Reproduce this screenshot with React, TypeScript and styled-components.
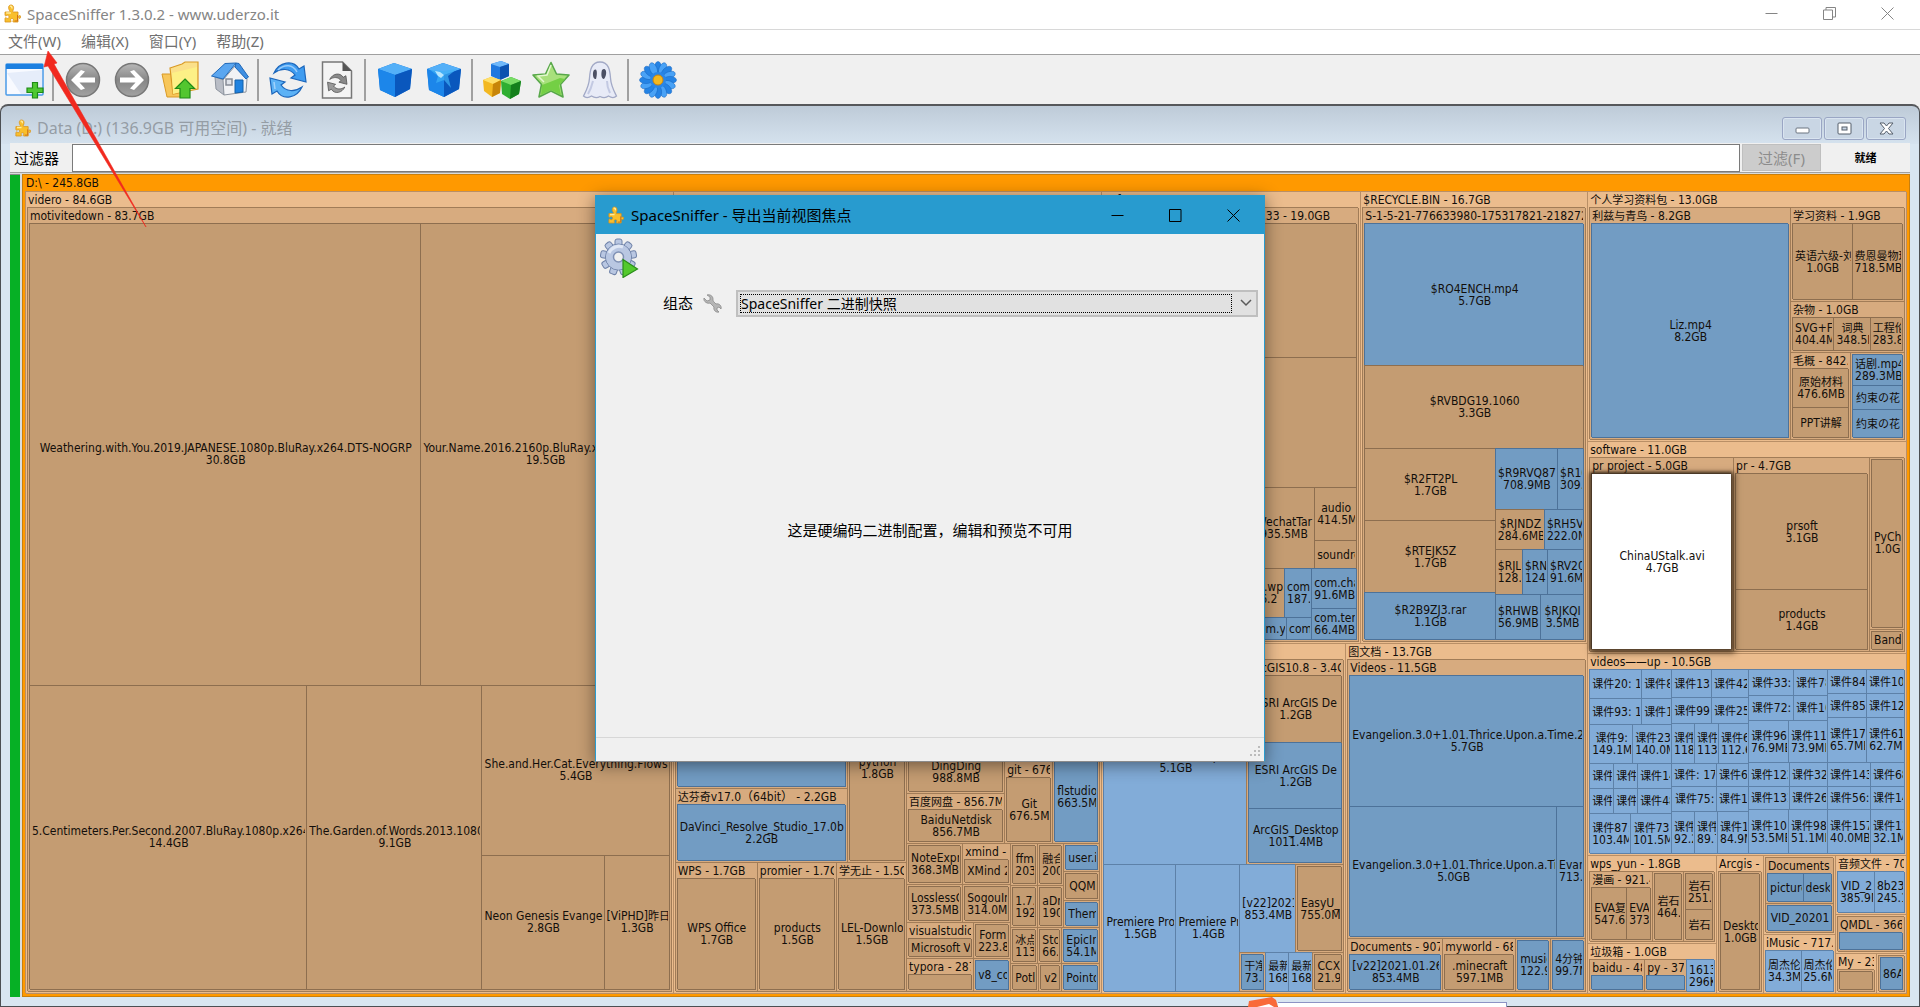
import React from "react";
import styled, { createGlobalStyle, css } from "styled-components";

const MAP_FONT = `"DejaVu Sans Condensed", "Noto Sans CJK SC", sans-serif`;
const UI_FONT = `"Noto Sans", "Noto Sans CJK SC", sans-serif`;

/* ---------- treemap data ---------- */

type Split = { kind: "row" | "col"; size: number; items: Item[] };
type Dir = { kind: "dir"; size: number; title: string; items: Item[]; flow: "row" | "col" };
type Leaf = { kind: "folder" | "file" | "active"; size: number; name: string; bytes: string };
type Item = Split | Dir | Leaf;

const row = (size: number, ...items: Item[]): Split => ({ kind: "row", size, items });
const col = (size: number, ...items: Item[]): Split => ({ kind: "col", size, items });
const dir = (size: number, title: string, ...items: Item[]): Dir => ({ kind: "dir", size, title, items, flow: "col" });
const dirRow = (size: number, title: string, ...items: Item[]): Dir => ({ kind: "dir", size, title, items, flow: "row" });
const folder = (size: number, name: string, bytes = ""): Leaf => ({ kind: "folder", size, name, bytes });
const file = (size: number, name: string, bytes = ""): Leaf => ({ kind: "file", size, name, bytes });
const active = (size: number, name: string, bytes = ""): Leaf => ({ kind: "active", size, name, bytes });
/* a directory too small for its own caption */
const boxed = (size: number, item: Leaf): Dir => dir(size, "", item);

const videro = dir(648, "videro - 84.6GB",
  dir(1, "motivitedown - 83.7GB",
    row(461,
      folder(391, "Weathering.with.You.2019.JAPANESE.1080p.BluRay.x264.DTS-NOGRP", "30.8GB"),
      folder(248, "Your.Name.2016.2160p.BluRay.x265.10bit.HDR", "19.5GB")),
    row(304,
      folder(277, "5.Centimeters.Per.Second.2007.BluRay.1080p.x264.DTS", "14.4GB"),
      folder(175, "The.Garden.of.Words.2013.1080p.BluRay", "9.1GB"),
      col(187,
        folder(170, "She.and.Her.Cat.Everything.Flows", "5.4GB"),
        row(134, folder(122, "Neon Genesis Evangeli", "2.8GB"), folder(65, "[ViPHD]昨日", "1.3GB"))))));

const programs = dirRow(429, "\u00a0",
  col(231,
    row(655,
      col(172,
        dir(581, "", file(1, "")),
        dir(74, "达芬奇v17.0（64bit） - 2.2GB", file(1, "DaVinci_Resolve_Studio_17.0b2", "2.2GB"))),
      col(59,
        folder(465, ""),
        dir(190, "", folder(1, "python", "1.8GB")))),
    row(129,
      dir(82, "WPS - 1.7GB", folder(1, "WPS Office", "1.7GB")),
      dir(79, "promier - 1.7G", folder(1, "products", "1.5GB")),
      dir(70, "学无止 - 1.5G", folder(1, "LEL-Downlo", "1.5GB")))),
  col(193,
    row(636,
      col(98,
        folder(542, ""),
        dir(44, "", folder(1, "DingDing", "988.8MB")),
        dir(50, "百度网盘 - 856.7M", folder(1, "BaiduNetdisk", "856.7MB"))),
      col(48, folder(554, ""), dir(82, "git - 676", folder(1, "Git", "676.5M"))),
      col(47, folder(542, ""), boxed(94, file(1, "flstudio_", "663.5M")))),
    row(148,
      col(104,
        row(41, boxed(56, folder(1, "NoteExpr", "368.3MB")), dir(48, "xmind - 3", folder(1, "XMind 2"))),
        row(38, boxed(56, folder(1, "LosslessC", "373.5MB")), boxed(48, folder(1, "SogouIn", "314.0M"))),
        row(36, dir(67, "visualstudio", folder(1, "Microsoft V")), boxed(37, folder(1, "Form", "223.8"))),
        row(33, dir(67, "typora - 287", folder(1, "")), boxed(37, file(1, "v8_co")))),
      col(89,
        row(84,
          col(53,
            row(42, boxed(27, folder(1, "ffm", "203")), boxed(26, folder(1, "融合", "200"))),
            row(42, boxed(27, folder(1, "1.7.", "192")), boxed(26, folder(1, "aDr", "190")))),
          col(36,
            boxed(28, file(1, "user.i")),
            boxed(29, folder(1, "QQM")),
            boxed(27, file(1, "Them")))),
        row(36, boxed(27, folder(1, "冰点", "113")), boxed(24, folder(1, "Sto", "66.")), boxed(38, file(1, "EpicIn", "54.1M"))),
        row(28, boxed(28, folder(1, "Potl")), boxed(23, folder(1, "v2")), boxed(38, file(1, "Pointo")))))));

const chat = dir(259, "software",
  dir(1, "Tencent File WeChat Files 6.8.33 - 19.0GB",
    folder(134, ""),
    folder(130, ""),
    row(81,
      folder(146, ""),
      folder(62, "WechatTar", "935.5MB"),
      col(42, folder(53, "audio", "414.5M"), folder(28, "soundre"))),
    row(71,
      col(205,
        row(49, folder(132, ""), folder(46, "com.wp", "106.2"), file(27, "com.", "187.")),
        row(22, folder(144, ""), file(36, "com.y"), file(25, "com"))),
      col(45, file(40, "com.cha", "91.6MB"), file(31, "com.ten", "66.4MB")))));

const recycle = dir(227, "$RECYCLE.BIN - 16.7GB",
  dir(1, "S-1-5-21-776633980-175317821-218272539",
    file(142, "$RO4ENCH.mp4", "5.7GB"),
    folder(83, "$RVBDG19.1060", "3.3GB"),
    row(191,
      col(130,
        folder(72, "$R2FT2PL", "1.7GB"),
        folder(72, "$RTEJK5Z", "1.7GB"),
        file(47, "$R2B9ZJ3.rar", "1.1GB")),
      col(88,
        row(61, file(62, "$R9RVQ87", "708.9MB"), file(26, "$R10", "309.")),
        row(40, folder(49, "$RJNDZ", "284.6MB"), file(39, "$RH5V", "222.0M")),
        row(45, folder(27, "$RJL", "128."), file(25, "$RN", "124."), file(36, "$RV20", "91.6M")),
        row(45, file(45, "$RHWB", "56.9MB"), file(43, "$RJKQI", "3.5MB"))))));

const premiere = dir(244, "软件安装 - 14.2GB",
  row(205,
    file(143, "Premiere Pro.zip", "5.1GB"),
    dir(97, "ArcGIS10.8 - 3.4G",
      folder(66, "ESRI ArcGIS De", "1.2GB"),
      file(66, "ESRI ArcGIS De", "1.2GB"),
      file(53, "ArcGIS_Desktop", "1011.4MB"))),
  row(127,
    file(72, "Premiere Pro", "1.5GB"),
    file(64, "Premiere Pr", "1.4GB"),
    col(104,
      row(88, file(56, "[v22]2021.", "853.4MB"), boxed(48, folder(1, "EasyU_", "755.0M"))),
      row(39,
        boxed(26, file(1, "干净", "73.")),
        file(23, "最新", "168"),
        file(24, "最新", "168"),
        boxed(31, folder(1, "CCX", "21.9"))))));

const pictures = dir(242, "图文档 - 13.7GB",
  dir(278, "Videos - 11.5GB",
    file(130, "Evangelion.3.0+1.01.Thrice.Upon.a.Time.2021", "5.7GB"),
    row(129, file(206, "Evangelion.3.0+1.01.Thrice.Upon.a.Time", "5.0GB"), file(27, "Evan", "713.0"))),
  row(53,
    dir(95, "Documents - 907.", file(1, "[v22]2021.01.26]", "853.4MB")),
    dir(73, "myworld - 68", folder(1, ".minecraft", "597.1MB")),
    boxed(35, file(1, "music", "122.9")),
    boxed(35, file(1, "4分钟", "99.7M"))));

const study = dirRow(250, "个人学习资料包 - 13.0GB",
  dir(201, "利兹与青鸟 - 8.2GB", file(1, "Liz.mp4", "8.2GB")),
  col(114,
    dirRow(94, "学习资料 - 1.9GB", folder(59, "英语六级-刘", "1.0GB"), folder(50, "费恩曼物理", "718.5MB")),
    dirRow(51, "杂物 - 1.0GB", folder(41, "SVG+F", "404.4M"), folder(36, "词典", "348.5M"), folder(32, "工程伦", "283.8")),
    row(87,
      dir(60, "毛概 - 842.", folder(39, "原始材料", "476.6MB"), folder(30, "PPT讲解")),
      dir(54, "", file(31, "话剧.mp4", "289.3MB"), file(24, "约束の花"), file(28, "约束の花")))));

const software = dirRow(212, "software - 11.0GB",
  dir(144, "pr project - 5.0GB", active(1, "ChinaUStalk.avi", "4.7GB")),
  dir(136, "pr - 4.7GB", folder(115, "prsoft", "3.1GB"), folder(59, "products", "1.4GB")),
  col(35, boxed(170, folder(1, "PyCh", "1.0G")), boxed(22, folder(1, "Band"))));

const lessons = dirRow(202, "videos——up - 10.5GB",
  col(82,
    row(29, file(52, "课件20: 1"), file(30, "课件8")),
    row(26, file(52, "课件93: 1"), file(30, "课件1")),
    row(39, file(43, "课件9:", "149.1M"), file(39, "课件23", "140.0M")),
    row(25, file(24, "课件"), file(24, "课件"), file(34, "课件14")),
    row(25, file(24, "课件"), file(24, "课件"), file(34, "课件48")),
    row(40, file(41, "课件87:", "103.4M"), file(41, "课件73", "101.5M"))),
  col(77,
    row(28, file(40, "课件13"), file(37, "课件42")),
    row(26, file(40, "课件99"), file(37, "课件25")),
    row(40, file(23, "课件", "118"), file(24, "课件", "113"), file(30, "课件6", "112.6")),
    row(23, file(45, "课件: 17"), file(32, "课件6")),
    row(25, file(45, "课件75:"), file(32, "课件1")),
    row(42, file(23, "课件", "92.2"), file(23, "课件", "89.7"), file(31, "课件1", "84.9M"))),
  col(79,
    row(26, file(45, "课件33:"), file(34, "课件78")),
    row(25, file(45, "课件72:"), file(34, "课件10")),
    row(42, file(40, "课件96", "76.9MB"), file(39, "课件11", "73.9MB")),
    row(24, file(41, "课件123"), file(38, "课件32")),
    row(23, file(41, "课件131:"), file(38, "课件26")),
    row(44, file(40, "课件109", "53.5MB"), file(39, "课件98", "51.1MB"))),
  col(77,
    row(24, file(39, "课件84"), file(38, "课件10")),
    row(24, file(39, "课件85"), file(38, "课件12")),
    row(45, file(39, "课件17", "65.7MB"), file(38, "课件61", "62.7M")),
    row(24, file(43, "课件143"), file(34, "课件68")),
    row(23, file(43, "课件56:"), file(34, "课件14")),
    row(44, file(43, "课件157", "40.0MB"), file(34, "课件11", "32.1M"))));

const small = row(138,
  col(129,
    dirRow(88, "wps_yun - 1.8GB",
      dirRow(63, "漫画 - 921.4", folder(35, "EVA复", "547.6"), folder(24, "EVA", "373")),
      boxed(31, folder(1, "岩石", "464.")),
      dir(31, "", folder(35, "岩石", "251."), folder(29, "岩石"))),
    dirRow(50, "垃圾箱 - 1.0GB",
      dir(55, "baidu - 48", file(1, "")),
      dir(42, "py - 37", file(1, "")),
      file(28, "1613", "296K"))),
  dir(47, "Arcgis -", boxed(1, folder(1, "Desktop", "1.0GB"))),
  col(72,
    dir(79, "",
      dirRow(46, "Documents -", file(35, "picture"), file(28, "desk")),
      boxed(29, file(1, "VID_20201"))),
    dirRow(59, "iMusic - 717.0", file(36, "周杰伦", "34.3M"), file(33, "周杰伦", "25.6M"))),
  col(71,
    dirRow(59, "音频文件 - 70", file(37, "VID_2", "385.9M"), file(30, "8b234", "245.1")),
    dir(39, "", dir(1, "QMDL - 366", file(1, ""))),
    row(40,
      dir(41, "My - 23", boxed(1, folder(1, ""))),
      dir(30, "", boxed(1, file(1, "86A"))))));

const disk = row(1,
  videro,
  programs,
  col(486,
    row(452, chat, recycle),
    row(350, premiere, pictures)),
  col(319, study, software, lessons, small));

/* ---------- treemap view ---------- */

const Stack = styled.div<{ $flow: "row" | "col" }>`
  display: flex;
  flex: 1 1 0;
  flex-direction: ${(p) => (p.$flow === "row" ? "row" : "column")};
  min-width: 0;
  min-height: 0;
`;

const cell = css<{ $line: string; $fill: string }>`
  min-width: 0;
  min-height: 0;
  border: solid ${(p) => p.$line};
  border-width: 1px 0 0 1px;
  box-shadow: 1px 1px 0 ${(p) => p.$line};
  background: ${(p) => p.$fill};
`;

const Group = styled.section<{ $line: string; $fill: string; $bare: boolean }>`
  ${cell}
  display: flex;
  flex-direction: column;
  padding: ${(p) => (p.$bare ? "1px" : "0")} 2px 2px 1px;
`;

const Caption = styled.header<{ $tall?: boolean }>`
  flex: none;
  height: ${(p) => (p.$tall ? 16 : 15)}px;
  padding-left: 1px;
  line-height: 17px;
  overflow: hidden;
  white-space: nowrap;
`;

const Tile = styled.div<{ $line: string; $fill: string; $raised?: boolean }>`
  ${cell}
  display: flex;
  flex-direction: column;
  justify-content: center;
  padding: 0 1px 0 2px;
  ${(p) =>
    p.$raised &&
    css`
      position: relative;
      z-index: 1;
      box-shadow: 0 0 3px 1px #4a3826, 2px 2px 6px 2px rgba(60, 40, 20, 0.7);
    `}
`;

/* the extra bottom padding keeps underscores from being clipped */
const TileText = styled.span`
  display: block;
  flex: none;
  margin-bottom: -2px;
  padding-bottom: 2px;
  overflow: hidden;
  white-space: nowrap;
  text-align: center;
  line-height: 12px;
`;

const Han = styled.span`
  font-size: 11px;
  line-height: 1;
`;

const groupLook = [
  { fill: "#ebbc8d", line: "#b98f66" },
  { fill: "#d7ab7f", line: "#a17c57" },
];
const folderLook = { fill: "#c49c72", line: "#8d6e4f" };
const fileLook = [
  { fill: "#82acd8", line: "#5d81a8" },
  { fill: "#82acd8", line: "#5d81a8" },
  { fill: "#729cc3", line: "#4d7299" },
];
const activeLook = { fill: "#ffffff", line: "#4a3826" };

/* Han glyphs are set one size down from the Latin text around them */
const mixed = (text: string) =>
  text
    .split(/([\u3040-\u30ff\u4e00-\u9fff]+)/)
    .filter(Boolean)
    .map((part, i) => (/^[\u3040-\u9fff]/.test(part) ? <Han key={i}>{part}</Han> : part));

function MapItem({ item, depth }: { item: Item; depth: number }) {
  const share = { flex: `${item.size} 1 ${item.size}px` };
  if (item.kind === "row" || item.kind === "col") {
    return (
      <Stack $flow={item.kind} style={share}>
        {item.items.map((child, i) => <MapItem key={i} item={child} depth={depth} />)}
      </Stack>
    );
  }
  if (item.kind === "dir") {
    const look = groupLook[Math.min(depth, 1)];
    return (
      <Group $line={look.line} $fill={look.fill} $bare={!item.title} style={share}>
        {item.title && <Caption>{mixed(item.title)}</Caption>}
        <Stack $flow={item.flow}>
          {item.items.map((child, i) => <MapItem key={i} item={child} depth={depth + 1} />)}
        </Stack>
      </Group>
    );
  }
  const look = item.kind === "folder" ? folderLook : item.kind === "active" ? activeLook : fileLook[Math.min(depth, 2)];
  return (
    <Tile $line={look.line} $fill={look.fill} $raised={item.kind === "active"} style={share}>
      {item.name && <TileText>{mixed(item.name)}</TileText>}
      {item.bytes && <TileText>{item.bytes}</TileText>}
    </Tile>
  );
}

/* ---------- page chrome ---------- */

const Global = createGlobalStyle`
  *, *::before, *::after { box-sizing: border-box; }
  body { margin: 0; background: #f0f0f0; overflow: hidden; }
  button, input, select { font: inherit; }
`;

const Desktop = styled.div`
  position: relative;
  display: flex;
  flex-direction: column;
  height: 100vh;
  overflow: hidden;
  background: #f0f0f0;
  font: 15px/20px ${UI_FONT};
  color: #000;
`;

const TitleBar = styled.header`
  display: flex;
  align-items: center;
  flex: none;
  height: 29px;
  padding: 0 4px 2px 3px;
  gap: 6px;
  background: #fff;
  color: #858585;
`;

const WindowTitle = styled.h1`
  flex: 1;
  margin: 0;
  font: inherit;
  white-space: nowrap;
`;

const WindowButtons = styled.div`
  display: flex;
  height: 100%;
`;

const WindowButton = styled.button`
  display: grid;
  place-items: center;
  width: 58px;
  height: 100%;
  padding: 0;
  border: 0;
  background: none;
  color: inherit;
`;

const MenuBar = styled.nav`
  display: flex;
  align-items: center;
  flex: none;
  height: 26px;
  padding: 0 8px 2px;
  gap: 20px;
  background: #fff;
  border-top: 1px solid #d8d8d8;
  border-bottom: 1px solid #a0a0a0;
`;

const MenuButton = styled.button`
  padding: 0;
  border: 0;
  background: none;
  color: #707070;
  line-height: 20px;
`;

const Toolbar = styled.div`
  display: flex;
  align-items: center;
  flex: none;
  height: 49px;
`;

const ToolButton = styled.button`
  display: grid;
  place-items: center;
  width: 49px;
  height: 48px;
  padding: 0;
  border: 0;
  background: none;
`;

const ToolSeparator = styled.span`
  width: 2px;
  height: 42px;
  margin: 0 4px 0 3px;
  background: #a0a0a0;
`;

const ChildWindow = styled.main`
  display: flex;
  flex-direction: column;
  flex: 1;
  min-height: 0;
  padding: 0 9px 9px 9px;
  border: 1px solid #4c4f53;
  border-top: 2px solid #56585b;
  border-radius: 8px 8px 0 0;
  background: linear-gradient(#becbd8, #d5e2ee 38px, #d9e6f1 38px);
`;

const ChildTitleBar = styled.header`
  display: flex;
  align-items: center;
  flex: none;
  height: 37px;
  padding: 7px 4px 0 4px;
  gap: 6px;
  color: #959da5;
  font-size: 16px;
`;

const ChildTitle = styled.h2`
  flex: 1;
  margin: 0;
  font: inherit;
`;

const ChildButtons = styled.div`
  display: flex;
  gap: 2px;
`;

const ChildButton = styled.button`
  display: grid;
  place-items: center;
  width: 40px;
  height: 23px;
  padding: 0;
  border: 1px solid #9aa6c4;
  border-radius: 3px;
  background: #c9d6e4;
  box-shadow: inset 0 0 0 1px #d9e4f0;
`;

const FilterBar = styled.form`
  display: flex;
  align-items: center;
  flex: none;
  height: 29px;
  background: #f0f0f0;
`;

const FilterLabel = styled.label`
  width: 62px;
  padding-left: 4px;
`;

const FilterInput = styled.input`
  flex: 1;
  min-width: 0;
  height: 28px;
  border: 1px solid #7a7a7a;
  background: #fff;
`;

const FilterButton = styled.button`
  width: 79px;
  height: 27px;
  margin-left: 2px;
  padding: 0;
  border: 1px solid #bfbfbf;
  background: #cccccc;
  color: #8c8c8c;
`;

const Status = styled.output`
  width: 89px;
  text-align: center;
  font-weight: bold;
  font-size: 11px;
`;

const MapArea = styled.div`
  display: flex;
  flex: 1;
  gap: 2px;
  min-height: 0;
  padding-top: 1px;
  border-top: 1px solid #a0a0a0;
  background: #d9dcdc;
`;

const FreeGauge = styled.div`
  width: 10px;
  background: #06b025;
  border-top: 1px solid #8a8a8a;
`;

const Root = styled.section`
  display: flex;
  flex-direction: column;
  flex: 1;
  min-width: 0;
  padding: 0 3px 3px 2px;
  border: 1px solid #c97f0c;
  background: #ff9900;
  font: 12px/15px ${MAP_FONT};
  color: #120e0a;
`;

/* ---------- export dialog ---------- */

const Dialog = styled.section`
  position: absolute;
  left: 595px;
  top: 195px;
  display: flex;
  flex-direction: column;
  width: 670px;
  height: 567px;
  z-index: 5;
  border: 1px solid #2a9bcd;
  border-bottom-color: #8b8b8b;
  background: #f0f0f0;
  box-shadow: 0 3px 16px rgba(0, 0, 0, 0.45);
`;

const DialogBar = styled.header`
  display: flex;
  align-items: center;
  flex: none;
  height: 38px;
  padding: 0 2px 0 11px;
  gap: 7px;
  background: #289bcf;
`;

const DialogTools = styled.div`
  flex: none;
  height: 55px;
  padding: 4px;
`;

const DialogRow = styled.div`
  display: flex;
  align-items: center;
  flex: none;
  height: 28px;
  padding: 0 6px 0 67px;
`;

const Picker = styled.div`
  display: flex;
  align-items: center;
  flex: 1;
  height: 27px;
  margin-left: 14px;
  padding-left: 2px;
  border: 2px solid #bfbfbf;
  background: #e1e1e1;
`;

const PickerSelect = styled.select`
  flex: 1;
  height: 19px;
  padding: 0;
  appearance: none;
  border: 1px dotted #000;
  border-radius: 0;
  background: none;
  color: #000;
  font-size: 14px;
  line-height: 17px;
`;

const PickerArrow = styled.svg`
  margin: 0 4px 0 8px;
`;

const WrenchSlot = styled.span`
  display: grid;
  margin-left: 10px;
`;

const Notice = styled.p`
  display: grid;
  place-items: center;
  flex: 1;
  margin: 0;
  padding-top: 6px;
`;

const StatusStrip = styled.footer`
  display: flex;
  justify-content: flex-end;
  align-items: flex-end;
  flex: none;
  height: 24px;
  padding: 0 3px 3px 0;
  border-top: 1px solid #d7d7d7;
`;

/* ---------- overlays ---------- */

const Arrow = styled.svg`
  position: absolute;
  left: 0;
  top: 0;
  z-index: 4;
  pointer-events: none;
`;

const Popup = styled.aside`
  position: absolute;
  left: 1248px;
  bottom: 0;
  z-index: 3;
  display: flex;
  align-items: flex-end;
  height: 10px;
`;

const PopupPanel = styled.div`
  width: 229px;
  height: 5px;
  border: 1px solid #8c93c4;
  border-bottom: 0;
  border-left: 0;
  background: #fff;
`;

/* ---------- icons ---------- */

const Puzzle = ({ size = 18 }: { size?: number }) => (
  <svg width={size} height={size + 1} viewBox="0 0 18 19">
    <path d="M2 8h4.500c.6 0 .4-.9 0-1.500C5 4 5.300 1 8 1s3.200 3 2 5.500c-.4.800-.3 1.500.5 1.500H15v3.500c0 .8.6 1 1 .5 1-.9 1.500-.5 1.500 1s-.8 1.800-1.500 1-1-.2-1 .5V18h-4.500c-.8 0-.8-.7-.4-1.300.7-1.300.2-2.200-1.100-2.200s-1.900 1-1.200 2.200c.4.6.3 1.300-.4 1.300H2v-3.500c0-.9.7-1 1.200-.6C5 15 6 14.200 6 12.800S4.800 10.700 3.200 11.700C2.600 12 2 11.900 2 11z" fill="#f9bf2c" stroke="#d8921c" strokeWidth=".8" />
    <path d="M7 2.500c1-.7 2.300 0 1.800 2M3.200 9H8" stroke="#ffeb9c" strokeWidth="1.500" fill="none" />
    <path d="M11.500 17h3v-6" stroke="#d06f12" strokeWidth="1" fill="none" />
  </svg>
);

const NewView = () => (
  <svg width="40" height="38" viewBox="0 0 40 38">
    <rect x="1" y="3" width="37" height="31" rx="1" fill="#f8faff" stroke="#4a9be8" strokeWidth="1.500" />
    <path d="M1 3h37v5H1z" fill="#1c80e0" />
    <path d="M2 12l35-3v24H16z" fill="#e6edfa" />
    <path d="M27.500 21.500h5v5.500H38v4.500h-5.500V37h-5v-5.500H22V27h5.500z" fill="#4fc832" stroke="#1f8a17" strokeWidth="1.200" />
  </svg>
);

const Round = ({ flip }: { flip?: boolean }) => (
  <svg width="36" height="36" viewBox="0 0 36 36">
    <defs>
      <linearGradient id={flip ? "rb" : "ra"} x1="0" y1="0" x2="0" y2="1">
        <stop offset="0" stopColor="#b8b8b8" /><stop offset=".5" stopColor="#868686" /><stop offset="1" stopColor="#a2a2a2" />
      </linearGradient>
    </defs>
    <circle cx="18" cy="18" r="16.500" fill={`url(#${flip ? "rb" : "ra"})`} stroke="#777" strokeWidth="1.500" />
    <g transform={flip ? "rotate(180 18 18)" : undefined}>
      <path d="M30 15.500H14.500L20 9.500l-4-1.500-10 10 10 10 4-1.500-5.500-6H30z" fill="#fff" />
    </g>
  </svg>
);

const FolderUp = () => (
  <svg width="40" height="38" viewBox="0 0 40 38">
    <path d="M1 13h8l2 2h12v21H6z" fill="#f7c65a" stroke="#d99a26" />
    <path d="M9 7l12-4 3-2h13v27L12 33z" fill="#fbe08a" stroke="#d99a26" strokeWidth="1.200" />
    <path d="M11 12l25-6v21l-24 6z" fill="#fdf086" />
    <path d="M24 18l9.500 9.500H29V37H19v-9.500h-4.500z" fill="#52c62f" stroke="#1f8a17" strokeWidth="1.200" />
  </svg>
);

const House = () => (
  <svg width="38" height="35" viewBox="0 0 38 35">
    <path d="M4 15l9 3v15l-8-6z" fill="#b9bdc6" stroke="#8d949e" />
    <path d="M12 18L24 4l12 13-1 13-22 3z" fill="#f1f2f5" stroke="#8d949e" />
    <path d="M15 17h6v6h-6z" fill="#dfe3ea" stroke="#868c96" strokeWidth="1.500" />
    <path d="M24 18h8v12l-8 1z" fill="#1f82e0" stroke="#1260aa" />
    <path d="M.5 14L14 1.500l11-.5-13 16z" fill="#5aa6f0" stroke="#1f68b8" />
    <path d="M24 5l1-4 3 .5L37.500 15 35 17z" fill="#3f8fe2" stroke="#1f68b8" />
  </svg>
);

const Sync = () => (
  <svg width="38" height="38" viewBox="0 0 38 38">
    <path d="M5 12C10 1 24-2 30 8l5-3 2 16-15-4 4-3C21 7 12 7 5 12z" fill="#3f9cf0" stroke="#1c66bb" strokeWidth="1.200" />
    <path d="M33 26C28 37 14 40 8 30l-5 3-2-16 15 4-4 3c5 7 14 7 21 2z" fill="#5cb2f6" stroke="#1c66bb" strokeWidth="1.200" />
    <path d="M9 9c6-6 15-6 19 2M5 21l1 7" stroke="#bfe0ff" strokeWidth="1.500" fill="none" opacity=".7" />
  </svg>
);

const PageSync = () => (
  <svg width="32" height="38" viewBox="0 0 32 38">
    <path d="M1.500 1h20l9 9v27h-29z" fill="#f4f4f4" stroke="#777" strokeWidth="1.500" />
    <path d="M21.500 1v9h9z" fill="#555" />
    <g transform="translate(6 12) scale(.54)">
      <path d="M5 12C10 1 24-2 30 8l5-3 2 16-15-4 4-3C21 7 12 7 5 12z" fill="#8a8a8a" stroke="#555" strokeWidth="1.500" />
      <path d="M33 26C28 37 14 40 8 30l-5 3-2-16 15 4-4 3c5 7 14 7 21 2z" fill="#9a9a9a" stroke="#555" strokeWidth="1.500" />
    </g>
  </svg>
);

const Cube = ({ spark }: { spark?: boolean }) => (
  <svg width="36" height="36" viewBox="0 0 36 36">
    <path d="M1 7L17 1l18 6-2 20-15 8L3 28z" fill="#1173dc" />
    <path d="M1 7L17 1l18 6-17 6z" fill="#54b0f8" />
    <path d="M18 13l17-6-2 20-15 8z" fill="#0a57bd" />
    <path d="M1 7l17 6v22L3 28z" fill="#1c86ea" />
    {spark && (
      <>
        <path d="M4 8l13 1 14-2-9 7 3 12-7-8-8 3 2-7z" fill="#3fb0f6" opacity=".7" />
        <path d="M9 9l5 1 4 3-3 3-3-2z" fill="#c4ecff" opacity=".9" />
      </>
    )}
  </svg>
);

const Boxes = () => (
  <svg width="40" height="38" viewBox="0 0 40 38">
    <path d="M9 3l10-3 8 3v12l-9 4-9-4z" fill="#1f78df" />
    <path d="M9 3l10-3 8 3-9 3z" fill="#6fb8fa" />
    <path d="M18 6l9-3v12l-9 4z" fill="#0c52b0" />
    <path d="M1 19l8-3 10 3-1 13-8 4-8-6z" fill="#f3b821" />
    <path d="M1 19l8-3 10 3-8 4z" fill="#ffe06a" />
    <path d="M11 23l8-4-1 13-8 4z" fill="#c78509" />
    <path d="M19 20l10-4 10 4-2 13-9 5-8-5z" fill="#2fae31" />
    <path d="M19 20l10-4 10 4-10 4z" fill="#79dd66" />
    <path d="M29 24l10-4-2 13-9 5z" fill="#14801c" />
  </svg>
);

const Star = () => (
  <svg width="40" height="38" viewBox="0 0 40 38">
    <path d="M20 1.500l5.500 11.500L38 14l-8.500 9.500L32 36l-12-6-12 6 2.500-12.500L2 14l12.500-1z" fill="#a8e07c" stroke="#58a84a" strokeWidth="1.600" strokeLinejoin="round" />
    <path d="M11 24l8-3 10-4 5 1-6 6 2 10-10-5-10 5z" fill="#74cf45" />
    <path d="M20 4l-4 10-9 1 6 6" fill="none" stroke="#e3f8cf" strokeWidth="1.500" />
  </svg>
);

const Ghost = () => (
  <svg width="36" height="38" viewBox="0 0 36 38">
    <path d="M18 1C9 1 8 10 7.500 17 7 25 4 30 1.500 35c2 2 5 2 8 0 3 2 6 2 8.500.5C21 37 24 37 26.500 35c3 2 6 2 8 0C32 30 29 25 28.500 17 28 10 27 1 18 1z" fill="#e8ebf7" stroke="#a2a9c6" strokeWidth="1.300" />
    <path d="M12 9c4-3 3 6 2 9-3 1-4-6-2-9zM20 9c4-4 6 4 2 9-3 0-3-6-2-9z" fill="#4b4f63" />
    <path d="M6 33c3-5 4-9 5-13M28 32c-2-4-3-8-3-12" stroke="#c3c9e2" strokeWidth="2" fill="none" />
  </svg>
);

const Flower = () => (
  <svg width="38" height="38" viewBox="-19 -19 38 38">
    {Array.from({ length: 16 }, (_, i) => (
      <ellipse key={i} cx="0" cy="-12" rx="3.600" ry="6.500" fill={i % 2 ? "#49a2f6" : "#2583e4"} stroke="#1465c0" strokeWidth=".5" transform={`rotate(${i * 22.5})`} />
    ))}
    <circle r="8" fill="#2a86e6" />
    <circle r="5" fill="#f3b81f" stroke="#c98410" />
  </svg>
);

const gearTeeth = Array.from({ length: 9 }, (_, i) => i * 40);
const GearRun = () => (
  <svg width="39" height="40" viewBox="0 0 39 40">
    <g fill="#b9c7e2" stroke="#6f82a8" strokeWidth="1">
      {gearTeeth.map((a) => <rect key={a} x="15" y="1" width="7" height="9" rx="2" transform={`rotate(${a} 18.500 19)`} />)}
      <circle cx="18.500" cy="19" r="13" />
    </g>
    <circle cx="18.500" cy="19" r="12.400" fill="#b9c7e2" />
    <path d="M9 15c3-6 9-8 14-6" stroke="#dfe7f5" strokeWidth="3" fill="none" />
    <circle cx="18.500" cy="19" r="5" fill="#f0f0f0" stroke="#7f90b4" strokeWidth="1.500" />
    <path d="M23 21.500L37.500 31 23 39.500z" fill="#53c92c" stroke="#2a8d1a" strokeWidth="1.200" />
  </svg>
);

const Wrench = () => (
  <svg width="19" height="19" viewBox="0 0 19 19">
    <path d="M1 4l3 3 3-1V3L4 1c3-1 6 1 6 4 0 1 0 2 1 3l2 2c3-1 6 2 5 5l-2-2-2 1v2l2 2c-3 1-6-2-5-5l-4-4C5 10 0 8 1 4z" fill="#b5b5b5" stroke="#8c8c8c" strokeWidth=".8" />
  </svg>
);

const Grip = () => (
  <svg width="12" height="12" viewBox="0 0 12 12" fill="#bcbcbc">
    <path d="M9 0h2v2H9zM9 4h2v2H9zM9 8h2v2H9zM5 4h2v2H5zM5 8h2v2H5zM1 8h2v2H1z" />
  </svg>
);

const glyph = (d: string) => (
  <svg width="13" height="13" viewBox="0 0 13 13" fill="none" stroke="currentColor"><path d={d} /></svg>
);
const MIN = "M.5 6.500h12";
const MAX = "M.5.5h11.500v12H.5z";
const CLOSE = "M.5.5l12 12M12.500.5l-12 12";

export default function App() {
  return (
    <Desktop>
      <Global />
      <TitleBar>
        <Puzzle />
        <WindowTitle>SpaceSniffer 1.3.0.2 - www.uderzo.it</WindowTitle>
        <WindowButtons>
          <WindowButton aria-label="最小化">{glyph(MIN)}</WindowButton>
          <WindowButton aria-label="还原">{glyph("M.5 3h9v9.500h-9zM3 3V.5h9.500V10H9.500")}</WindowButton>
          <WindowButton aria-label="关闭">{glyph(CLOSE)}</WindowButton>
        </WindowButtons>
      </TitleBar>
      <MenuBar>
        {["文件(W)", "编辑(X)", "窗口(Y)", "帮助(Z)"].map((label) => <MenuButton key={label}>{label}</MenuButton>)}
      </MenuBar>
      <Toolbar>
        <ToolButton aria-label="新建视图"><NewView /></ToolButton>
        <ToolSeparator />
        <ToolButton aria-label="后退"><Round /></ToolButton>
        <ToolButton aria-label="前进"><Round flip /></ToolButton>
        <ToolButton aria-label="上一级"><FolderUp /></ToolButton>
        <ToolButton aria-label="主页"><House /></ToolButton>
        <ToolSeparator />
        <ToolButton aria-label="重新扫描"><Sync /></ToolButton>
        <ToolButton aria-label="刷新"><PageSync /></ToolButton>
        <ToolSeparator />
        <ToolButton aria-label="减少细节"><Cube /></ToolButton>
        <ToolButton aria-label="增加细节"><Cube spark /></ToolButton>
        <ToolSeparator />
        <ToolButton aria-label="文件类型"><Boxes /></ToolButton>
        <ToolButton aria-label="可用空间"><Star /></ToolButton>
        <ToolButton aria-label="未知空间"><Ghost /></ToolButton>
        <ToolSeparator />
        <ToolButton aria-label="配置"><Flower /></ToolButton>
      </Toolbar>

      <ChildWindow>
        <ChildTitleBar>
          <Puzzle size={17} />
          <ChildTitle>Data (D:) (136.9GB 可用空间) - 就绪</ChildTitle>
          <ChildButtons>
            <ChildButton aria-label="最小化">
              <svg width="15" height="13"><rect x="1" y="6" width="13" height="5" rx="1" fill="#fff" stroke="#6b7480" /></svg>
            </ChildButton>
            <ChildButton aria-label="最大化">
              <svg width="15" height="13"><rect x="1" y="1" width="13" height="11" rx="1" fill="#fff" stroke="#555e6b" /><rect x="5" y="5" width="5" height="3" fill="#c9d6e4" stroke="#555e6b" /></svg>
            </ChildButton>
            <ChildButton aria-label="关闭">
              <svg width="15" height="13"><path d="M1 1h4l2.500 3L10 1h4l-4.500 5.500L14 12h-4L7.500 9 5 12H1l4.500-5.500z" fill="#fff" stroke="#555e6b" /></svg>
            </ChildButton>
          </ChildButtons>
        </ChildTitleBar>
        <FilterBar>
          <FilterLabel htmlFor="filter">过滤器</FilterLabel>
          <FilterInput id="filter" type="text" />
          <FilterButton type="button" disabled>过滤(F)</FilterButton>
          <Status>就绪</Status>
        </FilterBar>
        <MapArea>
          <FreeGauge />
          <Root>
            <Caption $tall>D:\ - 245.8GB</Caption>
            <MapItem item={disk} depth={0} />
          </Root>
        </MapArea>
      </ChildWindow>

      <Dialog role="dialog" aria-label="导出当前视图焦点">
        <DialogBar>
          <Puzzle size={17} />
          <WindowTitle>SpaceSniffer - 导出当前视图焦点</WindowTitle>
          <WindowButtons>
            <WindowButton aria-label="最小化">{glyph(MIN)}</WindowButton>
            <WindowButton aria-label="最大化">{glyph(MAX)}</WindowButton>
            <WindowButton aria-label="关闭">{glyph(CLOSE)}</WindowButton>
          </WindowButtons>
        </DialogBar>
        <DialogTools><GearRun /></DialogTools>
        <DialogRow>
          <label htmlFor="profile">组态</label>
          <WrenchSlot><Wrench /></WrenchSlot>
          <Picker>
            <PickerSelect id="profile" defaultValue="snapshot">
              <option value="snapshot">SpaceSniffer 二进制快照</option>
            </PickerSelect>
            <PickerArrow width="12" height="8" viewBox="0 0 12 8" fill="none" stroke="#5a5a5a" strokeWidth="1.500"><path d="M1 1l5 5 5-5" /></PickerArrow>
          </Picker>
        </DialogRow>
        <Notice>这是硬编码二进制配置，编辑和预览不可用</Notice>
        <StatusStrip><Grip /></StatusStrip>
      </Dialog>

      <Popup>
        <svg width="30" height="10" viewBox="0 0 30 10"><path d="M0 10l1-6L24 0l4 3 2 7z" fill="#f96a3a" /><path d="M9 10l12-3 5 3z" fill="#fff" /></svg>
        <PopupPanel />
      </Popup>

      <Arrow width="150" height="232" viewBox="0 0 150 232">
        <path d="M48 51l9 12-3 1 92 163-98-161-4 1z" fill="#f1291f" stroke="#f1291f" strokeWidth=".6" />
      </Arrow>
    </Desktop>
  );
}
